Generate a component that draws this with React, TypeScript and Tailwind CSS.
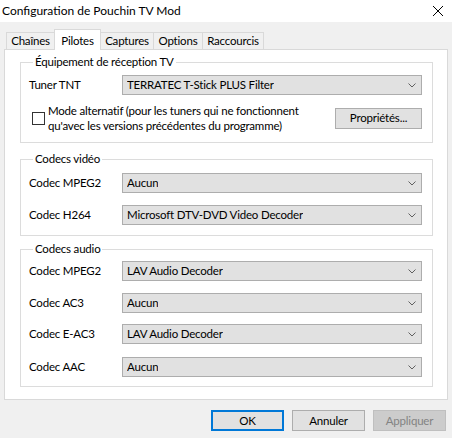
import React from "react";

const FONT = { fontFamily: 'Lato, "Noto Sans", Arial, sans-serif' };

const TABS = [
  { label: "Chaînes", width: "w-[49px]" },
  { label: "Pilotes", width: "w-[47px]", active: true },
  { label: "Captures", width: "w-[54px]" },
  { label: "Options", width: "w-[50px]" },
  { label: "Raccourcis", width: "w-[62px]" },
];

function Chevron() {
  return (
    <svg width="8" height="5" viewBox="0 0 8 5" className="shrink-0">
      <path d="M0.5 0.5 L4 4 L7.5 0.5" fill="none" stroke="#606060" strokeWidth="1" />
    </svg>
  );
}

function Combo({ value }: { value: string }) {
  return (
    <div className="flex h-[20px] w-[300px] items-center justify-between border border-[#adadad] bg-[#e1e1e1] pl-[4px] pr-[5px]">
      <span className="truncate">{value}</span>
      <Chevron />
    </div>
  );
}

function Row({ label, value, className = "" }: { label: string; value: string; className?: string }) {
  return (
    <div className={`flex items-center ${className}`}>
      <span className="w-[93px] shrink-0">{label}</span>
      <Combo value={value} />
    </div>
  );
}

function Group({
  title,
  className = "",
  children,
}: {
  title: string;
  className?: string;
  children: React.ReactNode;
}) {
  return (
    <fieldset className={`border border-[#dcdcdc] pl-[8px] pr-[10px] ${className}`}>
      <legend className="ml-[4px] px-[2px] leading-[16px]">{title}</legend>
      {children}
    </fieldset>
  );
}

function Button({
  children,
  variant = "normal",
}: {
  children: React.ReactNode;
  variant?: "default" | "normal" | "disabled";
}) {
  const styles = {
    default: "border-2 border-[#0078d7] bg-[#e1e1e1] text-black",
    normal: "border border-[#adadad] bg-[#e1e1e1] text-black",
    disabled: "border border-[#bfbfbf] bg-[#cccccc] text-[#838383]",
  };
  return (
    <div className={`flex h-[21px] w-[73px] items-center justify-center ${styles[variant]}`}>
      {children}
    </div>
  );
}

export default function App() {
  return (
    <div
      className="flex h-[438px] w-[452px] flex-col overflow-hidden bg-[#f0f0f0] text-[11.5px] tracking-[-0.2px] text-black"
      style={FONT}
    >
      {/* title bar */}
      <div className="flex h-[22px] shrink-0 items-center justify-between bg-white pl-[2px] pr-[9px]">
        <span className="text-[12px] tracking-normal">Configuration de Pouchin TV Mod</span>
        <svg width="10" height="10" viewBox="0 0 10 10">
          <path d="M0 0 L10 10 M10 0 L0 10" stroke="#000" strokeWidth="1" />
        </svg>
      </div>

      {/* tab strip */}
      <div className="mt-[7px] flex h-[20px] items-end pl-[6px]">
        {TABS.map((tab) =>
          tab.active ? (
            <div
              key={tab.label}
              className={`relative z-10 -mb-px -ml-px flex h-[21px] ${tab.width} items-start justify-center border border-b-0 border-[#d9d9d9] bg-white pt-[2px]`}
            >
              {tab.label}
            </div>
          ) : (
            <div
              key={tab.label}
              className={`-ml-px flex h-[17px] ${tab.width} items-center justify-center border border-b-0 border-[#d9d9d9] bg-[#f0f0f0] first:ml-0`}
            >
              {tab.label}
            </div>
          )
        )}
      </div>

      {/* tab page */}
      <div className="mx-[4px] flex h-[351px] flex-col border border-[#d9d9d9] bg-white px-[15px] pt-[4px]">
        <Group title="Équipement de réception TV" className="pb-[9px] pt-[5px]">
          <Row label="Tuner TNT" value="TERRATEC T-Stick PLUS Filter" />
          <div className="mt-[8px] flex h-[30px] items-center">
            <div className="ml-[3px] h-[13px] w-[13px] shrink-0 border border-[#333333] bg-white" />
            <p className="ml-[3px] whitespace-nowrap leading-[15px]">
              Mode alternatif (pour les tuners qui ne fonctionnent
              <br />
              qu'avec les versions précédentes du programme)
            </p>
            <div className="ml-auto flex h-[21px] w-[87px] shrink-0 items-center justify-center border border-[#adadad] bg-[#e1e1e1]">
              Propriétés...
            </div>
          </div>
        </Group>

        <Group title="Codecs vidéo" className="mt-[8px] pb-[10px] pt-[6px]">
          <Row label="Codec MPEG2" value="Aucun" />
          <Row label="Codec H264" value="Microsoft DTV-DVD Video Decoder" className="mt-[12px]" />
        </Group>

        <Group title="Codecs audio" className="mt-[5px] pb-[9px] pt-[4px]">
          <Row label="Codec MPEG2" value="LAV Audio Decoder" />
          <Row label="Codec AC3" value="Aucun" className="mt-[12px]" />
          <Row label="Codec E-AC3" value="LAV Audio Decoder" className="mt-[11px]" />
          <Row label="Codec AAC" value="Aucun" className="mt-[13px]" />
        </Group>
      </div>

      {/* dialog buttons */}
      <div className="mt-[10px] flex justify-end gap-[8px] pr-[6px]">
        <Button variant="default">OK</Button>
        <Button>Annuler</Button>
        <Button variant="disabled">Appliquer</Button>
      </div>
    </div>
  );
}
